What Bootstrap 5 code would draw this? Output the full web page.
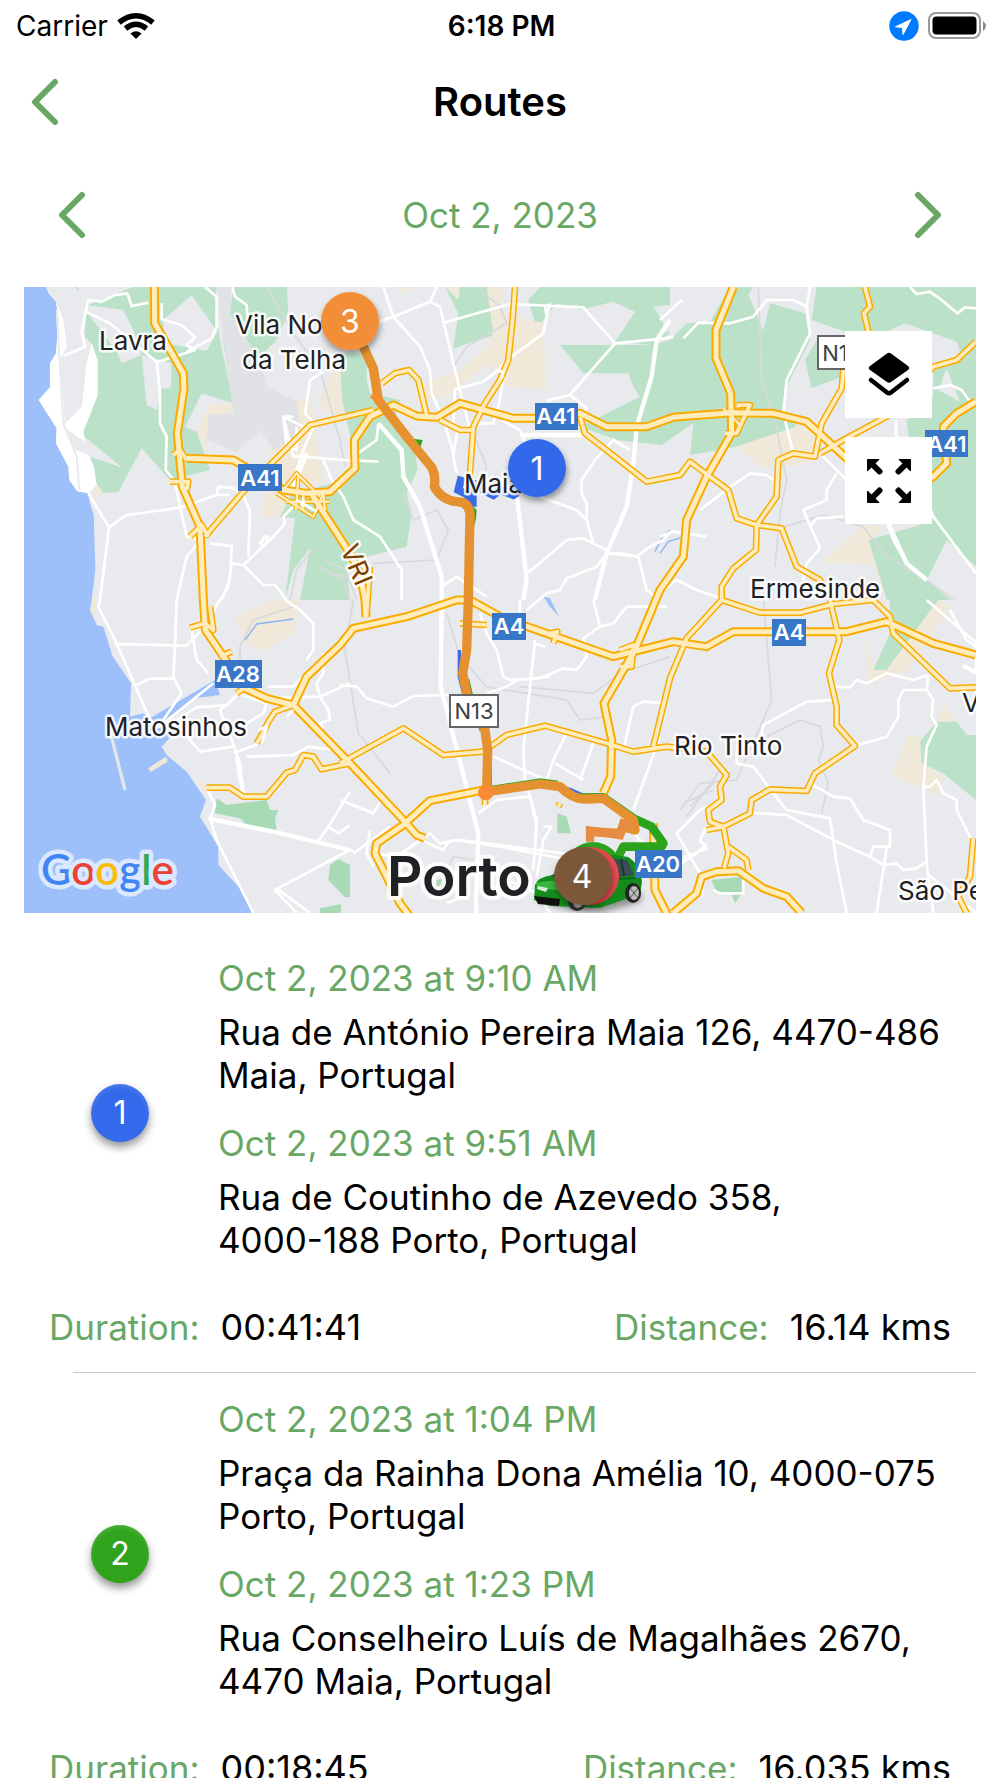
<!DOCTYPE html>
<html lang="en">
<head>
<meta charset="utf-8">
<meta name="viewport" content="width=device-width, initial-scale=1">
<title>Routes</title>
<link href="https://cdn.jsdelivr.net/npm/bootstrap@5.3.0/dist/css/bootstrap.min.css" rel="stylesheet">
<style>
body{font-family:Inter,"Noto Sans",sans-serif;color:#000;background:#fff;overflow-x:hidden}
.leaf{color:#69a765}
.status-bar{height:52px;padding:0 13px 0 16px;font-size:28px;line-height:52px}
.status-side{flex:1 1 0}
.title-bar{height:100px;padding:0 25px}
.title-bar h1{font-size:40px;line-height:48px;font-weight:600}
.date-bar{height:126px;padding:0 53px}
.date-text{font-size:35px;line-height:42px}
.chev{width:38px;height:58px;line-height:1;color:#69a765}
.chev svg{width:38px;height:58px;display:block}
.side-slot{width:38px}
.map-wrap{margin:0 24px;padding-top:9px}
.map-wrap>svg{display:block;width:100%;height:auto}
.map-tools{top:53px;right:44px;gap:19px}
.map-tools button{width:87px;height:87px;background:#fff}
.route{padding:25px 49px 24px;font-size:35px;line-height:42px}
.routes-list{margin-top:19px}
.route-badge{width:58px;height:58px;line-height:58px;font-size:32px;color:#fff;box-shadow:0 5px 8px rgba(0,0,0,.42),inset 0 3px 5px rgba(255,255,255,.12)}
.badge-col{width:142px;flex:none;padding-top:6px}
.route-stops{width:758px;margin-right:-25px}
.stop-time{margin-bottom:12px}
.stop-two{margin-top:25px}
.stop-addr{line-height:43px}
.totals{margin-top:44px}
.totals dt{font-weight:400;margin-right:21px}
.totals dd{font-size:36px;margin:0}
.sep{height:1px;background:#c8c8ca;margin:0 24px 0 73px}
.road-edge,.road-fill,.street,.thin{fill:none;stroke-linejoin:round}
.lab{font-size:26px;fill:#202124;stroke:#fff;stroke-width:5px;paint-order:stroke;stroke-linejoin:round;stroke-opacity:.85}
.city{font-size:55px;font-weight:600;stroke-width:8px}
.shield{font-size:22px;font-weight:600;fill:#fff;text-anchor:middle}
.shield-n{font-size:22px;fill:#3c4043;text-anchor:middle}
.pin{font-size:32px;fill:#fff;text-anchor:middle}
.logo-text{font-family:Lato,sans-serif;font-size:42px;font-weight:600;paint-order:stroke;stroke:#dce8fd;stroke-width:9px;stroke-linejoin:round}
</style>
<script src="https://cdn.jsdelivr.net/npm/bootstrap@5.3.0/dist/js/bootstrap.bundle.min.js"></script>
</head>
<body>
<div class="status-bar d-flex align-items-center">
  <div class="status-side d-flex align-items-center">
    <span>Carrier</span>
    <svg class="ms-2" width="40" height="30" viewBox="0 0 40 30" aria-label="Wi-Fi"><path d="M3 10.500Q20-3 37 10.500" transform="translate(0 1)" fill="none" stroke="#000" stroke-width="5.500"/><path d="M9.500 17.500Q20 9 30.500 17.500" fill="none" stroke="#000" stroke-width="5.500"/><path d="M14.500 22.500Q20 18 25.500 22.500L20 28Z"/></svg>
  </div>
  <div class="fw-semibold text-center">6:18 PM</div>
  <div class="status-side d-flex align-items-center justify-content-end">
    <svg width="30" height="30" viewBox="0 0 30 30" aria-label="Location"><circle cx="15" cy="15" r="14.700" fill="#007aff"/><path d="M22 8.500 14 23.500 13.500 16.500 6.500 15.800Z" fill="#fff" stroke="#fff" stroke-linejoin="round"/></svg>
    <svg class="ms-2" width="60" height="30" viewBox="0 0 60 30" aria-label="Battery"><rect x="2" y="2" width="51" height="25" rx="7" fill="none" stroke="#999" stroke-width="2"/><rect x="5.500" y="5.500" width="44" height="18" rx="4"/><path d="M56 10q6 5 0 10Z" fill="#888"/></svg>
  </div>
</div>
<header class="title-bar d-flex align-items-center justify-content-between">
  <button class="chev btn p-0 border-0" aria-label="Back"><svg viewBox="0 0 38 58"><path d="M30 9 10 29 30 49" fill="none" stroke="#69a765" stroke-width="6" stroke-linecap="round" stroke-linejoin="round"/></svg></button>
  <h1 class="m-0">Routes</h1>
  <span class="side-slot"></span>
</header>
<div class="date-bar d-flex align-items-center justify-content-between">
  <button class="chev btn p-0 border-0" aria-label="Previous day"><svg viewBox="0 0 38 58"><path d="M29 9 9 29 29 49" fill="none" stroke="#69a765" stroke-width="6" stroke-linecap="round" stroke-linejoin="round"/></svg></button>
  <div class="date-text leaf">Oct 2, 2023</div>
  <button class="chev btn p-0 border-0" aria-label="Next day"><svg viewBox="0 0 38 58"><path d="M9 9 29 29 9 49" fill="none" stroke="#69a765" stroke-width="6" stroke-linecap="round" stroke-linejoin="round"/></svg></button>
</div>

<main>
<div class="map-wrap position-relative">
<svg viewBox="24 287 952 626" role="img" aria-label="Map of Porto with routes">
<defs>
<filter id="sh" x="-30%" y="-30%" width="160%" height="170%"><feDropShadow dx="1" dy="4" stdDeviation="3" flood-opacity=".4"/></filter>
<filter id="soft"><feGaussianBlur stdDeviation="3"/></filter>
<g id="motorways">
<path d="M403 21 404 130 490 280 492 325 472 460 487 620 540 740 550 960 556 1050 675 1225 740 1255 820 1275 990 1450 1150 1620 1190 1665 1215 1675"/>
<path d="M500 535 640 540 700 575 790 630 860 640 930 635 1005 565 1003 480 1050 410 1120 375 1190 408 1250 412 1320 370 1480 415 1590 415 1680 400 1760 440 1880 440 1960 412 2135 398 2260 400 2360 425 2480 535 2600 660 2740 590 2780 550 2770 440 2810 400 2868 365"/>
<path d="M870 635 990 820 1020 880 1035 960 1038 1012"/>
<path d="M820 1275 860 1190 960 1095 1000 1045 1160 1010 1310 960 1350 960 1450 1015 1780 1130 1960 1085 2060 1100 2140 1055 2480 1055 2600 1025 2740 1090 2868 1125"/>
<path d="M2140 21 2088 150 2088 235 2132 340 2135 460 2060 590 2000 720 1990 830 1920 930 1845 1110 1752 1270 1775 1380 1772 1490 1750 1540"/>
<path d="M1900 1630 1905 1830 1950 1920M1960 1899 2030 1840 2045 1790 2090 1775 2155 1772 2230 1825 2300 1850 2345 1899"/>
<path d="M1390 1530 1230 1562 1150 1635 1070 1690 1065 1720 1140 1870 1170 1910"/>
</g>
<g id="secondary">
<path d="M555 770 670 635 870 435 1060 390M960 1450 1150 1345 1270 1425 1390 1415 1460 1365 1575 1337 1760 1390 1840 1415 1940 1400 2060 1415 2120 1485 2100 1520 2105 1560 2065 1590 2070 1625 2110 1640 2125 1720 2112 1765"/>
<path d="M560 1523 630 1523 670 1550 740 1550 800 1478 825 1470 850 1425 880 1430 905 1468 990 1450M820 1275 765 1295 745 1325 725 1365 710 1390"/>
<path d="M1485 21 1478 120 1465 240 1440 300 1395 370 1360 440 1350 580 1352 640M1085 310 1125 280 1167 270 1195 300 1220 405M1260 420 1320 450 1355 450"/>
<path d="M1680 410 1695 460 1880 605 1980 585 2010 545 2070 590 2125 630 2150 715 2210 735 2285 745 2330 860 2400 900 2440 960"/>
<path d="M2535 21 2550 80 2532 100 2545 155M2470 270 2465 325 2405 430 2385 530 2320 520 2275 540 2270 650 2210 735 2208 810 2140 865 2105 920 2105 960 2000 1075 1950 1195 1900 1400M2400 520 2470 480 2600 410 2740 260 2810 240 2868 185"/>
<path d="M2105 960 2220 998 2340 998 2440 972 2560 960 2610 1010 2620 1060 2790 1225 2868 1222M2430 960 2458 1080 2427 1180 2450 1280 2450 1335 2505 1398 2385 1480 2360 1533 2250 1528 2195 1560 2190 1600 2110 1640 2060 1650M2125 1700 2180 1740 2185 1770M2860 1675 2850 1790 2815 1850 2840 1899"/>
<path d="M460 525 480 510 500 540M450 605 505 605 500 630M510 770 545 735 565 770M510 1043 555 1030 580 1050 570 980M670 1225 650 1240M600 1130 635 1115M2150 375 2190 375 2150 460 2115 460M1590 1060 1612 1055 1600 1090M1800 1110 1840 1095 1835 1160 1800 1160M1320 1030 1400 1035M1395 1530 1395 1575M1040 1000 1050 860M1620 1570 1615 1580"/>
</g>
<path id="ramps" d="M790 630 830 580 900 650M835 590 828 690M770 640 880 710 910 640 915 690M800 665H930M850 640V690M2110 385 2165 440M2150 380 2185 372"/>
<g id="trackline"><path d="M1030 200 1060 265 1075 360 1160 470 1235 562Q1248 585 1243 620 1265 660 1310 665 1345 665 1350 700L1345 960 1340 1110 1328 1180 1345 1260 1395 1350 1403 1410 1400 1535 1560 1512 1620 1520Q1660 1560 1700 1557L1750 1555 1840 1620 1845 1650 1810 1640 1800 1660 1710 1655"/></g>
</defs>
<rect x="24" y="287" width="952" height="626" fill="#e8eaed"/>
<g transform="translate(20 280) scale(.33333)">
<g fill="#bbe2c8">
<path d="M165 21H590L585 60 600 180 640 370 545 340 495 440 530 455 570 570 450 600 365 505 295 635 235 640 228 610 200 510 190 455 233 345V240L215 190 195 170 200 60Z"/>
<path d="M640 21H800L805 95 770 180 720 230 735 310 720 350 640 370 610 190 630 100Z"/>
<path d="M945 220H1040V300L1050 340 1140 360 1125 420 1185 500 1192 570 1160 640 1175 700 1160 800 1040 830 980 850 990 960H840L870 805 820 870 795 960 825 715 765 710 755 655 940 610 1010 550 960 330Z"/>
<path d="M740 1060 780 960H835L825 1060Z"/>
<path d="M1275 21H1405L1425 165 1300 205 1315 100Z"/>
<path d="M1525 60 1560 21H1950V75L1900 80 1950 160 1900 195 1785 185 1845 95 1780 65 1680 90 1610 70 1550 145Z"/>
<path d="M1620 195H1900L1950 180 2000 130 2070 125 2130 21H2200L2185 45 2230 150 2250 70 2355 100 2370 180 2305 310 2285 390 2330 440 2150 500 2010 525 2020 430 1925 495 1790 480 1680 440 1860 350 1840 320 1825 280H1690Z"/>
<path d="M2390 21H2868V860L2780 780 2720 900 2790 960H2600L2545 780 2700 735 2660 420 2740 350 2740 200 2655 130 2600 155 2475 155 2375 120Z"/>
<path d="M2355 240 2390 180 2470 230 2465 290 2375 325Z"/>
<path d="M2610 960H2755L2600 1170H2560L2610 1060ZM2690 1395 2750 1325 2810 1325 2840 1365 2868 1365V1560L2770 1480 2705 1450Z"/>
</g>
<g fill="#f0e9d9">
<path d="M575 370 640 373 635 400 570 405 560 510 530 455 550 410ZM720 345 800 365 870 350 910 610 830 610 780 710 720 710 740 640 750 480ZM960 250 910 320 895 390 970 410ZM1445 100 1570 130 1580 330 1460 320 1400 250 1300 340 1190 370 1180 320 1320 270 1400 200ZM640 1010 760 960H840L825 1060 725 1115 675 1085ZM2150 500 2330 440 2390 440 2400 530 2320 560 2220 560ZM2405 845 2530 735 2600 740 2545 780 2600 960 2560 855ZM2540 1050 2560 1170 2600 1170 2755 960 2790 980 2660 1175 2540 1210ZM2665 1365 2700 1370 2705 1450 2770 1490 2750 1545 2615 1485ZM2775 1270 2810 1325H2750ZM205 960 228 950 222 1040ZM230 610 250 640 215 665ZM1275 21H1320L1315 60ZM1400 21H1450L1440 150 1420 160ZM550 1500 530 1500 560 1545ZM1120 21H1180L1160 40Z"/>
</g>
<g fill="#e0e2e6"><path d="M590 21H635L630 100 720 240 740 320 830 365 840 430 830 470 760 510 720 450 650 515 560 480 565 405 640 400Z"/></g>
<g fill="#e8eaed">
<path d="M205 75 310 90 340 150 365 225 305 250 290 215 200 95ZM515 45 592 155 560 212 430 190V120ZM365 225 455 250 452 325H425L410 390 380 375ZM130 505 145 430 305 562ZM175 21H340L240 60 205 75 190 130ZM2190 45 2330 25 2350 75 2250 70 2228 150ZM1980 21H2085L2055 70 1990 65ZM1920 75 1980 130 1935 160Z"/>
<path d="M2655 130 2810 185 2825 230 2740 260V200ZM2780 265 2820 365 2755 330Z"/>
</g>
<path d="M12 21H78L85 40 108 66 116 120 108 220 90 250V322L56 360 110 445 108 490 145 560 148 600 172 634 205 640 208 662 221 705 226 870 215 960 210 990 230 1035 250 1040 275 1120V1125L333 1210 330 1310 370 1300 390 1315 585 1200 600 1245 525 1255 430 1330 470 1350 425 1400 440 1425 500 1475 558 1560 540 1610 595 1700V1755L665 1830 700 1899H12Z" fill="#9dbffa"/>
<path d="M108 66 130 120 140 200 120 240 135 430 185 380 200 250 215 190 233 240V345L190 455 200 510 222 560 230 615 205 640 172 634 148 600 145 560 108 490 110 445 56 360 90 322V250L108 220 116 120Z" fill="#fff"/>
<path d="M130 440 305 562 165 510Z" fill="#e8eaed"/>
<path d="M110 90 130 430 170 530 178 630M130 430 180 380" stroke="#e8eaed" stroke-width="6" fill="none"/>
<path d="M388 1470 440 1435M390 1470 440 1440" stroke="#f0e9d9" stroke-width="12"/><path d="M272 1360 315 1530" stroke="#e4e6ea" stroke-width="10"/>
<g fill="#a8dab5"><path d="M590 1555 620 1575 740 1560 750 1590 775 1590 765 1615 770 1655 680 1635 660 1615 585 1600ZM955 1738 990 1755V1850L975 1852 925 1800 930 1755ZM900 1885 963 1872V1899H900ZM1612 1600 1640 1610 1653 1660H1612ZM2075 1800 2165 1790V1840L2145 1870 2135 1840 2090 1840ZM1250 1800 1275 1795V1825L1245 1830ZM960 1745 987 1760 980 1850 955 1830Z"/></g>
<path d="M675 1080 710 1032 820 1017M1905 815 1925 775 1950 750M1920 820 1945 785 1985 772" stroke="#8ab4f8" stroke-width="4" fill="none"/>
<path d="M1570 950 1590 955 1617 1010 1590 980Z" fill="#9dbffa"/>
<g class="thin" stroke="#d7d9dd" stroke-width="5">
<path d="M740 21 820 160 900 270 960 480 975 560M1370 21 1440 80 1460 130 1340 200 1300 260M1360 460 1400 560 1390 590M1150 640 1180 720 1250 690 1285 750 1250 840 1060 850M880 805 830 870 810 960M2215 21 2225 300 2260 400 2300 600 2280 700 2265 860M2265 750 2410 705 2530 740 2600 830 2720 900 2800 960M820 980 700 1020 660 1100V1160M1250 1840 1300 1730 1360 1740M1280 1000 1320 1130 1400 1220 1640 1260 1680 1320 1760 1310M2230 960 2255 1260 2225 1330 2150 1500 2040 1510 1980 1590M1000 960 975 1110 1015 1360 1110 1480M1500 1220 1720 1240 1800 1180 1950 1130M980 880 1010 960M2180 1400 2340 1320 2400 1340 2410 1400 2395 1440 2425 1510 2405 1600"/>
<path d="M900 860 970 900 990 960M910 840 980 870M920 880 980 890M2000 1610 2100 1470M1990 1570 2080 1530M2010 1580 2090 1500"/>
</g>
<g class="street" stroke="#fff" stroke-width="8">
<path d="M205 60 245 65 285 45 322 40 335 78 385 68M205 60 197 95 185 155 195 200 130 228M197 95 270 130 410 245 420 340 420 430 440 470 437 570 465 605 480 680 500 770 530 775M425 70V118L485 135 525 172 500 195 525 210 415 245M555 21 590 50V140L575 175 500 215M637 21 645 50 680 75 683 120"/>
<path d="M205 640 267 742 240 960 235 980 285 1080 395 1330 415 1342M267 742 320 705 480 683 590 645 630 645M590 645 595 620 640 625 670 645 690 695 685 830M570 790 635 798 632 850 670 855 730 915 765 915 800 960M670 855 760 770 795 730 790 710 820 680M735 770 720 790 735 795 745 770Z"/>
<path d="M530 795 500 830 470 960 465 1100 460 1190 485 1240 415 1342M635 850 625 920 600 960 575 1000M625 910 605 960M285 1092 500 1097 555 1040M350 1215 390 1196H465M415 1342 480 1290 580 1210M555 1040 515 1050 530 1140 565 1180"/>
<path d="M910 275 870 300 855 400 885 430 850 510 820 600M790 410 820 530 850 530 970 540 1075 545M790 410 850 440M820 410 790 410 800 500 830 510 830 440M910 540 935 600 970 650 1000 720 1080 770 1145 870 1145 960"/>
<path d="M1090 21 1120 110 1200 200 1230 270 1235 340 1275 430 1300 520M1120 110 1230 65 1250 21M1230 65 1260 80 1300 250 1350 450 1360 600M1120 110 1065 130M1270 128 1470 72 1690 82 1785 190 1935 175 1960 170M1575 75 1580 110 1570 160 1460 240M1390 305 1305 328 1300 430M1590 70 1580 110M1785 190 1650 345 1580 362M1650 345 1700 385 1680 430M1460 240 1435 270 1390 305M1450 290 1440 360 1420 430 1360 430 1310 460 1300 530 1310 580M1445 420 1500 450 1520 500"/>
<path d="M1560 650 1670 690 1700 720 1720 790 1760 810 1725 960M1830 510 1780 480 1725 540 1685 600V640L1700 670V720M1520 880 1560 850 1640 780 1690 775 1720 790M1760 820 1800 820 1850 830 1890 800 1930 780 1950 755M1760 820 1730 860 1640 895 1620 930 1580 940 1520 990M1760 820 1855 830 1880 930 1920 960"/>
<path d="M1265 920 1310 890 1400 950M1075 430 1070 480 1000 530M960 1215 1010 1220 1040 1255 1120 1280 1180 1248 1290 1245M1380 1000 1400 1060 1430 1110 1450 1190 1470 1200 1560 1195 1630 1165 1670 1170 1700 1130M1545 1080 1510 1410 1515 1500 1550 1620 1545 1690M1500 960 1500 1010M1540 1090 1575 1100M1720 960 1740 1040 1690 1075 1700 1130M1740 1040 1780 1030 1820 980 1940 980M1400 1240 1460 1220 1490 1200 1590 1190"/>
<path d="M1990 175 2035 128 2130 130 2200 110 2240 60H2320L2360 80 2370 160 2300 300 2290 400 2320 520M2370 21 2360 80M2320 520 2400 520 2480 600 2600 720 2620 780 2660 850 2720 900M1920 770 1960 755 2060 770M2040 690 2125 625 2190 580 2240 585 2260 600M2450 580 2420 630 2420 660 2350 690 2400 805 2360 850 2350 900M2370 740 2390 715 2470 710M1930 930 1970 900 2030 930 2120 960M2670 21 2690 42 2730 35 2765 60 2812 100 2835 82 2868 85M2740 325 2790 315 2825 330 2850 365M2628 420V465L2670 510 2740 710 2868 880M1985 60 1920 120"/>
<path d="M2720 960 2870 1090 2868 1175 2830 1155M2790 990 2840 1080 2868 1100M2868 1090 2868 1180 2830 1160M2445 1220 2490 1222 2510 1200 2540 1210 2600 1180 2680 1200 2725 1185M2505 1398 2600 1370 2635 1310 2635 1260 2650 1230H2720L2725 1185M2720 1230 2740 1260 2735 1310 2750 1335 2720 1400 2710 1520 2720 1750 2740 1899M2710 1520 2730 1520 2750 1500 2770 1540 2810 1560 2810 1590 2855 1680"/>
<path d="M2150 1400 2220 1390 2230 1335 2360 1265 2440 1260M2150 1410 2150 1450 2200 1460 2260 1540 2300 1590 2430 1615 2450 1750 2480 1899M2370 1510 2440 1550 2490 1555 2530 1620 2610 1650 2610 1700H2560L2550 1730 2460 1690 2300 1605 2195 1598M2550 1730 2590 1755 2630 1750 2650 1770 2690 1765 2720 1745M2600 1705 2570 1899M2720 1780 2868 1899"/>
<path d="M670 1230 650 1245 620 1275 530 1282 470 1320 510 1380 540 1415 640 1400M620 1275 600 1290 635 1380 660 1450 670 1540M680 1430 820 1425 865 1400 950 1410M640 1420 720 1390 735 1350M665 1245 740 1270 730 1300 680 1330M745 1220H820L850 1190M740 1255 900 1250 990 1210M795 960 840 990 880 1030V1110L860 1140M910 1120 910 1180 890 1210 900 1250 925 1290 930 1320 900 1330 910 1345"/>
<path d="M560 1525 585 1575 570 1615 590 1680 700 1899M565 1615 760 1655 1000 1712M990 1535 925 1640 890 1690M990 1710 765 1830 830 1899M770 1825 870 1899M925 1640 955 1660 990 1635M1060 1720 1130 1730 1230 1660 1260 1690 1310 1680 1440 1700 1650 1740M1190 1675 1270 1710 1290 1680M1320 1680 1630 1720 1670 1730M1000 1720 1110 1640M960 1560 1060 1600 1090 1550M1050 1650 1040 1720 1060 1760M1350 1760 1330 1850 1280 1870M1440 1790 1550 1840 1590 1899"/>
<path d="M1375 1600 1430 1560 1530 1550M1420 1430 1600 1510 1670 1540M1580 1500 1600 1440 1640 1360M1605 1450 1665 1485 1690 1500M1680 1500 1720 1390M1530 1550 1550 1640 1540 1770M1570 1640H1595L1570 1680 1550 1790M1810 1410 1840 1280 1870 1265 1940 1270M1920 1370 1840 1590M1800 1590 1830 1650 1950 1770 2030 1720 2060 1690M1970 1660 2040 1590 2060 1580M1970 1660 2040 1780 2050 1840M2060 1640 2040 1680 2060 1705 1990 1735M2080 1830 2100 1840H2170V1800"/>
</g>
<g class="street" stroke="#fff" stroke-width="13"><path d="M1950 120 1910 180 1895 290 1850 440 1840 550 1820 680 1760 820 1725 960M1490 640 1520 900 1510 960M1075 430 1145 510 1150 590 1200 680 1265 890 1265 960 1262 1220 1375 1660 1368 1870 1370 1899M860 520 820 620M570 1617 760 1655 990 1710M650 1430 670 1540M2600 720 2660 850 2720 900M1500 465H1690"/></g>
<g class="road-edge" stroke="#f9ab00" stroke-width="20"><use href="#secondary"/></g>
<g class="road-edge" stroke="#f9ab00" stroke-width="14"><use href="#ramps"/></g>
<g class="road-edge" stroke="#f9ab00" stroke-width="27"><use href="#motorways"/></g>
<g class="road-fill" stroke="#ffecbd" stroke-width="7"><use href="#ramps"/></g>
<g class="road-fill" stroke="#ffecbd" stroke-width="11"><use href="#secondary"/></g>
<g class="road-fill" stroke="#ffecbd" stroke-width="15"><use href="#motorways"/></g>
<path d="M830 660 890 695M850 655 845 680M1425 272 1450 275 1445 295M800 1310 820 1290M715 1350 740 1340 725 1390" stroke="#fff" stroke-width="8" fill="none"/>
<path d="M1325 590 1315 630 1345 645V690M1358 600V680M1380 625 1420 645 1440 630 1480 645 1510 625" stroke="#3a6ce8" fill="none" stroke-width="24"/>
<path d="M1318 1110V1190L1332 1245M1590 1515 1650 1528 1700 1550" stroke="#3a6ce8" stroke-width="10" fill="none"/>
<path d="M1165 475 1208 480 1200 505ZM1350 670 1370 690 1368 715 1355 770Z" fill="#28a519"/>
<g fill="none" stroke="#2ba31d" stroke-width="26" stroke-linejoin="round"><path d="M1403 1410 1403 1532 1560 1508 1612 1515M1665 1553 1750 1552 1840 1615 1895 1640 1930 1690 1925 1700H1810L1780 1760"/><path d="M1335 1200 1349 1258 1392 1350"/></g>
<use href="#trackline" fill="none" stroke="#e69130" stroke-width="28" stroke-linejoin="round"/>
<path d="M1845 1640 1810 1630 1800 1665 1710 1652V1685" fill="none" stroke="#e88b43" stroke-width="25"/>
<circle cx="1397" cy="1538" r="23" fill="#fb8b32"/><path d="M1055 345 1085 365" stroke="#fb8b32" stroke-width="18"/>
</g>

<g class="lab">
<text x="99" y="350">Lavra</text><text x="235" y="334">Vila Nova</text><text x="242" y="369">da Telha</text><text x="464" y="493">Maia</text><text x="750" y="598">Ermesinde</text><text x="105" y="736">Matosinhos</text><text x="674" y="755">Rio Tinto</text><text x="898" y="900">São Pedro</text><text x="962" y="712">Valongo</text>
<text x="340" y="549" transform="rotate(67 340 549)" fill="#7b3f00">VRI</text>
<text class="city" x="387" y="896">Porto</text>
</g>
<g fill="#3877c7"><rect x="238" y="464" width="44" height="27"/><rect x="535" y="403" width="43" height="27"/><rect x="925" y="430" width="43" height="27"/><rect x="215" y="660" width="47" height="28"/><rect x="492" y="613" width="34" height="27"/><rect x="772" y="619" width="34" height="27"/></g>
<g class="shield"><text x="260" y="486">A41</text><text x="556" y="424">A41</text><text x="947" y="452">A41</text><text x="238" y="682">A28</text><text x="509" y="634">A4</text><text x="789" y="640">A4</text></g>
<g fill="#fff" stroke="#666" stroke-width="2"><rect x="450" y="695" width="48" height="32"/><rect x="818" y="336" width="48" height="33"/></g>
<g class="shield-n"><text x="474" y="719">N13</text><text x="842" y="361">N14</text></g>

<text class="logo-text" x="41" y="885"><tspan fill="#4285f4">G</tspan><tspan fill="#ea4335">o</tspan><tspan fill="#fbbc04">o</tspan><tspan fill="#4285f4">g</tspan><tspan fill="#34a853">l</tspan><tspan fill="#ea4335">e</tspan></text>

<circle cx="593" cy="871" r="29" fill="#2ba31d"/>
<g id="car">
<path d="M535 900 570 910 600 913 640 902 642 892 560 890Z" fill="#555" opacity=".6" filter="url(#soft)"/>
<path d="M535 885Q538 877 552 875L572 862Q590 853 615 855L628 857Q640 864 642 882L640 894 600 908 550 906 534 900Z" fill="#148c1c"/>
<path d="M552 876 573 862Q586 856 604 857L600 876 575 882Z" fill="#2f4845"/>
<path d="M614 859 627 860 634 875 611 878Z" fill="#3d4b55"/><path d="M621 859 624 876" stroke="#173d20" stroke-width="2"/>
<path d="M536 883Q554 878 574 884L562 890 537 889Z" fill="#35b83b"/>
<path d="M534 896 560 899 559 906 538 904Z" fill="#111"/><path d="M538 886 548 888 546 892 537 889ZM562 890 572 887 570 893 562 895Z" fill="#d8e8d8"/>
<path d="M600 880 636 878M600 858 599 904" stroke="#0b6414" stroke-width="2"/>
<ellipse cx="633" cy="893" rx="8" ry="10" fill="#222"/><ellipse cx="634" cy="893" rx="5" ry="7" fill="#bbb"/><path d="M630 888 638 898M638 888 630 898" stroke="#555"/>
<ellipse cx="577" cy="902" rx="9" ry="9" fill="#333"/><ellipse cx="578" cy="902" rx="5" ry="6" fill="#aaa"/>
</g>
<rect x="635" y="850" width="47" height="28" fill="#3877c7"/><text class="shield" x="658" y="872">A20</text>
<circle cx="590" cy="876" r="29" fill="#e84b50"/>
<g filter="url(#sh)"><circle cx="350" cy="321" r="29" fill="#f38e37"/><circle cx="537" cy="468" r="29" fill="#3369eb"/><circle cx="583" cy="876" r="29" fill="#7b5838"/></g>
<g class="pin"><text x="350" y="333">3</text><text x="537" y="480">1</text><text x="582" y="888">4</text></g>
</svg>
<div class="map-tools position-absolute d-flex flex-column">
<button class="border-0 p-0" aria-label="Map layers"><svg width="44" height="46" viewBox="0 0 44 46"><path d="M20 1.500Q22 0 24 1.500L41 14Q43.500 16 41 18L24 30Q22 31.500 20 30L3 18Q.5 16 3 14Z"/><path d="M4 28 20 40.500Q22 42 24 40.500L40 28" fill="none" stroke="#000" stroke-width="4.500" stroke-linecap="round"/></svg></button>
<button class="border-0 p-0" aria-label="Full screen"><svg width="44" height="44" viewBox="0 0 44 44"><defs><g id="arw"><path d="M.5 .5H12L.5 12Z" stroke="#000" stroke-linejoin="round"/><path d="M4 4 12.500 12.500" stroke="#000" stroke-width="6" stroke-linecap="round"/></g></defs><use href="#arw"/><use href="#arw" transform="translate(44 0) scale(-1 1)"/><use href="#arw" transform="translate(0 44) scale(1 -1)"/><use href="#arw" transform="translate(44 44) scale(-1 -1)"/></svg></button>
</div>
</div>

<section class="routes-list">
<article class="route">
  <div class="d-flex align-items-center">
    <div class="badge-col d-flex justify-content-center"><span class="route-badge rounded-circle text-center" style="background:#3369eb">1</span></div>
    <div class="route-stops ms-auto">
      <div class="stop-time leaf">Oct 2, 2023 at 9:10 AM</div>
      <div class="stop-addr">Rua de António Pereira Maia 126, 4470-486<br>Maia, Portugal</div>
      <div class="stop-time stop-two leaf">Oct 2, 2023 at 9:51 AM</div>
      <div class="stop-addr">Rua de Coutinho de Azevedo 358,<br>4000-188 Porto, Portugal</div>
    </div>
  </div>
  <div class="totals d-flex justify-content-between">
    <dl class="d-flex align-items-baseline m-0"><dt class="leaf">Duration:</dt><dd>00:41:41</dd></dl>
    <dl class="d-flex align-items-baseline m-0"><dt class="leaf">Distance:</dt><dd>16.14 kms</dd></dl>
  </div>
</article>
<div class="sep"></div>
<article class="route">
  <div class="d-flex align-items-center">
    <div class="badge-col d-flex justify-content-center"><span class="route-badge rounded-circle text-center" style="background:#2fa31b">2</span></div>
    <div class="route-stops ms-auto">
      <div class="stop-time leaf">Oct 2, 2023 at 1:04 PM</div>
      <div class="stop-addr">Praça da Rainha Dona Amélia 10, 4000-075<br>Porto, Portugal</div>
      <div class="stop-time stop-two leaf">Oct 2, 2023 at 1:23 PM</div>
      <div class="stop-addr">Rua Conselheiro Luís de Magalhães 2670,<br>4470 Maia, Portugal</div>
    </div>
  </div>
  <div class="totals d-flex justify-content-between">
    <dl class="d-flex align-items-baseline m-0"><dt class="leaf">Duration:</dt><dd>00:18:45</dd></dl>
    <dl class="d-flex align-items-baseline m-0"><dt class="leaf">Distance:</dt><dd>16.035 kms</dd></dl>
  </div>
</article>
</section>
</main>
</body>
</html>
